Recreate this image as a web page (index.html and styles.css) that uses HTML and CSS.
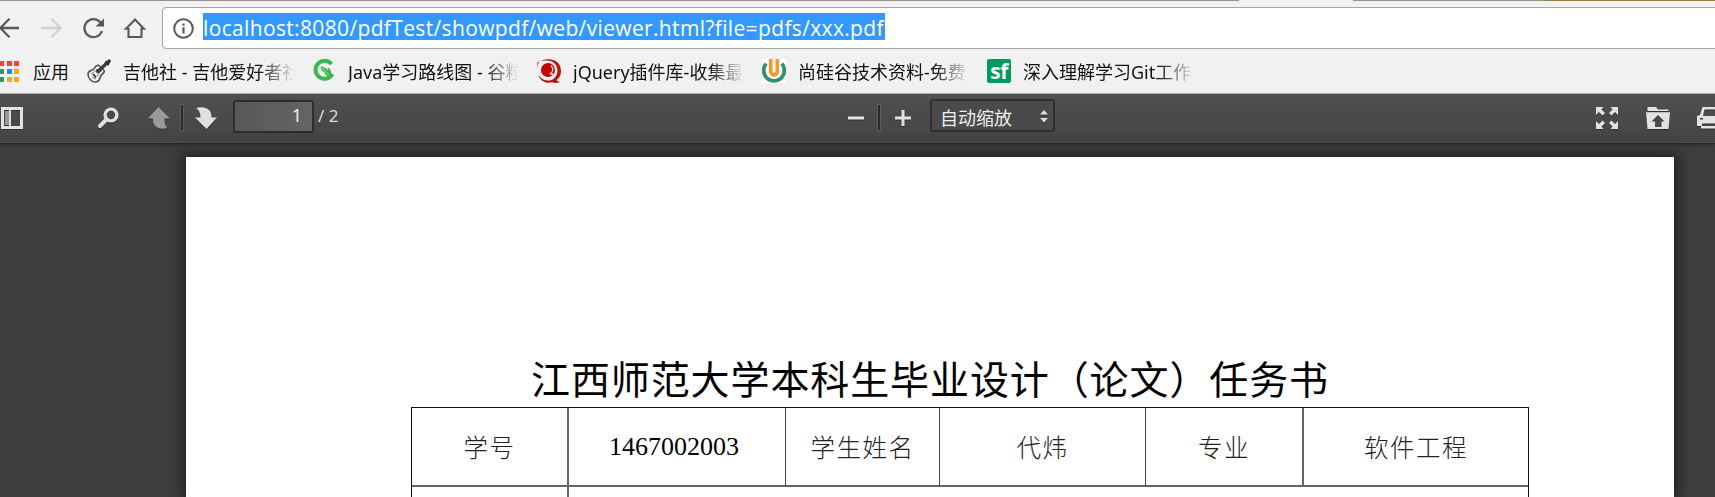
FILE: index.html
```html
<!DOCTYPE html>
<html lang="zh-CN">
<head>
<meta charset="utf-8">
<title>viewer</title>
<link rel="stylesheet" href="styles.css">
</head>
<body>
<div class="tabline"><i class="tan"></i><i class="gap"></i><i class="tan2"></i><i class="olive"></i></div>
<header class="navbar">
  <svg class="nav" width="147" height="42" viewBox="0 7 147 42" fill="none" stroke="#5a5a5a" stroke-width="2.3">
    <path d="M19 28H1M9.500 18.800L0.500 28l9 9.200"/>
    <path stroke="#d0d0d0" d="M41 28h19M51.500 18.800l9 9.200-9 9.200"/>
    <path d="M100.500 22.500A9 9 0 1 0 102 31"/>
    <path d="M104 18.500v8h-8.500z" fill="#5a5a5a" stroke="none"/>
    <path d="M126 28.800l9-9.300 9 9.300h-2.500v8.200h-13v-8.200z" stroke-width="2.100"/>
  </svg>
  <div class="omnibox">
    <svg width="21" height="21" viewBox="0 0 21 21" fill="none" stroke="#5a5a5a"><circle cx="10.500" cy="10.500" r="9.300" stroke-width="2"/><path d="M10.500 9.300v6.200M10.500 5.500v2.300" stroke-width="2.200"/></svg>
    <span class="url">localhost:8080/pdfTest/showpdf/web/viewer.html?file=pdfs/xxx.pdf</span>
  </div>
</header>
<nav class="bookmarks">
  <svg class="apps" width="19" height="21" viewBox="0 0 19 21"><path fill="#fb4036" d="M0 0h4v5H0zM7 0h5v5H7zM14 0h5v5h-5z"/><path fill="#2a9d58" d="M0 8h4v5H0zM0 16h4v5H0z"/><path fill="#1a8cff" d="M7 8h5v5H7z"/><path fill="#fba907" d="M14 8h5v5h-5zM7 16h5v5H7zM14 16h5v5h-5z"/></svg>
  <span class="appname">应用</span>
  <div class="bm"><svg width="24" height="24" viewBox="0 0 24 24"><path d="M1 15c0-4 4-3 6-5 1-1.500 1.500-4.500 5-3.500l5 5c1.500 3-3 3-3.500 6s-2 5.500-5.500 5.500-7-4-7-8z" fill="#f6f6f6" stroke="#555" stroke-width="1.600"/><path d="M4 15c2-2 4-2 5.500-3.500M15 12c-3 1-4 3-4.500 5.500M5 18l4 2" stroke="#777" fill="none"/><circle cx="11" cy="12" r="2.200" fill="#444"/><path d="M11 12.500L20.500 3.500" stroke="#3a3a3a" stroke-width="3.200"/><path d="M17.500 3L22.500 0 24 2l-2.500 4.500-3-.5z" fill="#333"/><path d="M6 15l3 3.500" stroke="#333" stroke-width="1.800"/></svg><span>吉他社 - 吉他爱好者社</span></div>
  <div class="bm"><svg width="24" height="24" viewBox="0 0 24 24"><path d="M19.500 5A9 9 0 1 0 20.500 15" fill="none" stroke="#3db54a" stroke-width="4"/><path d="M8.500 7.500c4 .5 6 2 7 4l.5-3c3 2 4 5 3 9-4 0-6-2-6.500-4-2-1-3.500-3-4-6z" fill="#3db54a"/><path d="M10 9l7 7" stroke="#bfe8c3" stroke-width=".8"/></svg><span>Java学习路线图 - 谷粒</span></div>
  <div class="bm"><svg width="24" height="24" viewBox="0 0 24 24"><circle cx="11" cy="11" r="7" fill="#c40000"/><path d="M4 2C11-2 24 0 24 12c0 4-1.500 7-4.500 9 .8 1.200 2 1.500 3.500 2-3 1.500-6 1-8 .3C9 25 3 22 1.500 16c4 6 11 7 15.500 3.500C23 14 21 3 12 1.800 9 1.300 6.500 1.500 4 2z" fill="#b91212"/><path d="M0 11V3l2.500-.5C1 5 .3 8 0 11z" fill="#e46c6c"/><path d="M14 6.500c3 3 2 7.500-1.500 8.500M13 14.500c2 0 3.500 1 4.500 3" fill="none" stroke="#f1dada" stroke-width="1.300"/></svg><span>jQuery插件库-收集最</span></div>
  <div class="bm"><svg width="24" height="24" viewBox="0 0 24 24"><path fill="#fff" d="M0 0h24v24H0z"/><path d="M4 4.500C-1.500 13 4 21.800 12 21.800S25.500 13 20 4.500" fill="none" stroke="#2f8f79" stroke-width="3.800"/><path d="M8.700 0v12.500a3.300 3.300 0 0 0 6.600 0V0" fill="none" stroke="#f39a2a" stroke-width="3.700"/></svg><span>尚硅谷技术资料-免费</span></div>
  <div class="bm"><b class="sf">sf</b><span>深入理解学习Git工作</span></div>
</nav>
<section class="viewer">
  <div class="toolbar">
    <svg class="side" width="22" height="22" viewBox="0 0 22 22"><path fill="#e3e3e3" fill-rule="evenodd" d="M0 0h22v22H0zM3 3v16h16V3z"/><path fill="#999" d="M4 4h4v14H4z"/><path fill="#ddd" d="M8 3h2v16H8z"/></svg>
    <svg class="find" width="22" height="22" viewBox="0 0 22 22" fill="none" stroke="#e0e0e0"><circle cx="13" cy="8" r="5.900" stroke-width="3.400"/><path d="M8.500 12.500l-6.500 6.500" stroke-width="4" stroke-linecap="round"/></svg>
    <svg class="up" width="22" height="22" viewBox="0 0 22 22"><path fill="#999" d="M10.500 0L22 11.500h-5.500c-.3 4 .5 7 2.500 9.500-4 1.500-9 .8-12-2-1.500-2-2-4.500-2-7.500H0z"/></svg>
    <i class="sep sep1"></i>
    <svg class="down" width="22" height="22" viewBox="0 0 22 22"><path fill="#e0e0e0" d="M1 1c5-1.500 10-1 13 2 2 2 2.500 4.500 2.500 7.500H22L11.500 22 0 10.500h5.500C5.500 6 4 3 1 1z"/></svg>
    <div class="pageno">1</div><span class="total">/ 2</span>
    <svg class="minus" width="16" height="16" viewBox="0 0 16 16"><path fill="#e2e2e2" d="M0 6.500h16v3H0z"/></svg>
    <i class="sep sep2"></i>
    <svg class="plus" width="16" height="16" viewBox="0 0 16 16"><path fill="#e2e2e2" d="M0 6.500h6.500V0h3v6.500H16v3H9.500V16h-3V9.500H0z"/></svg>
    <div class="scale"><span>自动缩放</span><svg width="8" height="13" viewBox="0 0 8 13"><path fill="#ddd" d="M4 0l4 4.500H0zM0 8h8l-4 4.500z"/></svg></div>
    <svg class="full" width="22" height="22" viewBox="0 0 22 22" fill="#e2e2e2"><path d="M0 0h7.500L5.500 2.500l3.500 3.500-2.500 2.500L3 5 0 8z"/><path transform="matrix(-1 0 0 1 22 0)" d="M0 0h7.500L5.500 2.500l3.500 3.500-2.500 2.500L3 5 0 8z"/><path transform="matrix(1 0 0 -1 0 22)" d="M0 0h7.500L5.500 2.500l3.500 3.500-2.500 2.500L3 5 0 8z"/><path transform="matrix(-1 0 0 -1 22 22)" d="M0 0h7.500L5.500 2.500l3.500 3.500-2.500 2.500L3 5 0 8z"/></svg>
    <svg class="open" width="24" height="22" viewBox="0 0 24 22"><path fill="#e2e2e2" fill-rule="evenodd" d="M1.500 4V0H10l2 2.500h10.500V4zM0 5.200h24L22.500 22h-21zM12 8l-6.500 6.500H9V20h6.500v-5.500h3z"/></svg>
    <svg class="print" width="18" height="22" viewBox="0 0 18 22"><path fill="#e2e2e2" fill-rule="evenodd" d="M5.500 0H18v8h2v8h-2v5.500H4V19H0V9l3-1zM7.500 2.500L6 9h12V2.500zM3 11v1.500h3V11zM5.500 16.500L4.500 19H18v-2.500z"/></svg>
  </div>
  <main class="page">
    <h1>江西师范大学本科生毕业设计（论文）任务书</h1>
    <div class="table">
      <div class="cell wide">学号</div><div class="cell num">1467002003</div><div class="cell">学生姓名</div><div class="cell">代炜</div><div class="cell wide">专业</div><div class="cell last">软件工程</div>
      <div class="cell2 first"></div><div class="cell2 rest"></div>
    </div>
  </main>
</section>
</body>
</html>
```
FILE: styles.css
```css
* { box-sizing: border-box; }
body {
  margin: 0; width: 1715px; height: 497px; overflow: hidden;
  display: flex; flex-direction: column; background: #f1f1f1;
  font-family: "Noto Sans", "Noto Sans CJK SC", sans-serif;
}
svg { display: block; flex: none; }
.tabline { display: flex; height: 1px; flex: none; }
.tan { width: 1239px; background: #9b9388; }
.gap { width: 114px; }
.tan2 { width: 192px; background: #9b9388; }
.olive { flex: 1; background: #917b43; }

.navbar { display: flex; height: 48px; flex: none; padding-top: 6px; }
.nav { margin-right: 15px; }
.omnibox {
  width: 1560px; height: 42px; flex: none; display: flex; align-items: flex-start;
  border: 1px solid #a6a6a6; border-radius: 4px; background: #fff; padding: 5px 0 0 10px;
}
.omnibox svg { margin-top: 5px; }
.url {
  margin-left: 9px; width: 682px; height: 27px; line-height: 30px; background: #3399ff;
  color: #fff; font-family: "Open Sans", sans-serif; font-size: 21px; letter-spacing: .35px; white-space: nowrap;
}

.bookmarks {
  height: 45px; flex: none; display: flex; align-items: center;
  border-bottom: 1px solid #b0b0b0; font-size: 18px; line-height: 26px; white-space: nowrap; color: #111;
}
.appname { margin-left: 14px; width: 54px; padding-top: 2px; }
.bm { width: 206px; margin-right: 19px; display: flex; align-items: center; gap: 12px; flex: none; }
.bm span {
  width: 170px; padding-top: 2px; overflow: hidden;
  -webkit-mask-image: linear-gradient(to right, #000 135px, transparent 172px);
  mask-image: linear-gradient(to right, #000 135px, transparent 172px);
}
.sf {
  width: 24px; height: 24px; flex: none; border-radius: 2px; background: #009a61; color: #fff;
  font: bold 21px/24px "Open Sans", sans-serif; text-align: center; letter-spacing: -.5px;
}

.viewer { flex: 1; background: #3e3e3e; display: flex; flex-direction: column; }
.toolbar {
  height: 49px; flex: none; display: flex; align-items: flex-start; padding-top: 13px;
  background: linear-gradient(#505050, #444); border-bottom: 1px solid #505050;
  box-shadow: 0 1px 1px #262626, 0 2px 4px rgba(0,0,0,.25);
}
.toolbar > * { flex: none; }
.toolbar svg { filter: drop-shadow(0 1px 0 rgba(0,0,0,.35)); }
.side { margin-left: 1px; }
.find { margin-left: 75px; }
.up { margin-left: 28px; }
.sep { width: 2px; height: 25px; margin-top: -2px; background: #292929; box-shadow: 0 0 1px 1px rgba(255,255,255,.12); }
.sep1 { margin-left: 11px; }
.down { margin-left: 12px; }
.pageno {
  margin: -7px 0 0 16px; width: 81px; height: 33px; border: 2px solid #2d2d2d; border-radius: 3px;
  background: linear-gradient(to right, #595959, #646464); color: #eee; font-size: 18px; line-height: 27px;
  text-align: right; padding-right: 10px;
}
.total { margin: -7px 0 0 4px; width: 30px; font-size: 17px; line-height: 31px; color: #ddd; }
.minus { margin: 3px 0 0 500px; }
.sep2 { margin-left: 14px; }
.plus { margin: 3px 0 0 15px; }
.scale {
  margin: -8px 0 0 19px; width: 125px; height: 33px; border: 2px solid #303030; border-radius: 3px;
  display: flex; justify-content: space-between; padding: 0 5px 0 8px; background: #4a4a4a;
  font: 18px/33px "Noto Sans CJK SC", sans-serif; color: #eee;
}
.scale svg { margin-top: 9px; }
.full { margin-left: 541px; }
.open { margin-left: 28px; }
.print { margin-left: 27px; }

.page {
  margin: 14px 0 0 186px; width: 1488px; height: 340px; flex: none; background: #fff;
  box-shadow: 0 0 14px 3px #1c1c1c; padding: 193px 0 0 225px;
}
h1 {
  margin: 0 0 0 120px; height: 57px; font: 400 39px/55px "Noto Sans CJK SC", sans-serif;
  letter-spacing: .9px; color: #000; white-space: nowrap;
}
.table {
  width: 1118px; display: grid; grid-template-columns: 157px 217px 154px 206px 158px 224px;
  grid-template-rows: 79px 12px; border: 1px solid #111;
}
.cell {
  display: flex; align-items: center; justify-content: center; border-right: 1px solid #444;
  border-bottom: 2px solid #666; font-family: "Noto Sans CJK SC", sans-serif; font-size: 24.5px;
  font-weight: 300; letter-spacing: 1.5px; color: #222;
}
.wide { border-right: 2px solid #666; }
.num { font-family: "Liberation Serif", serif; font-size: 26px; letter-spacing: 0; color: #000; padding-right: 6px; }
.last { border-right: 0; }
.first { border-right: 2px solid #666; }
.rest { grid-column: 2 / -1; }
```
